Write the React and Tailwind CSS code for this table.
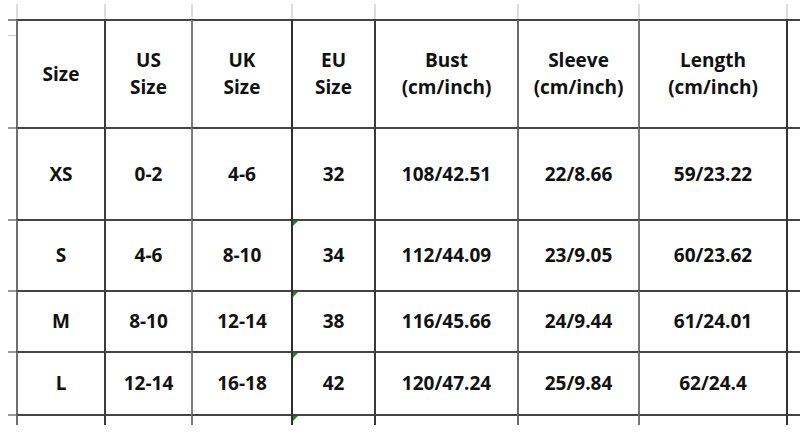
import React from 'react';

const header = [
  ['Size'],
  ['US', 'Size'],
  ['UK', 'Size'],
  ['EU', 'Size'],
  ['Bust', '(cm/inch)'],
  ['Sleeve', '(cm/inch)'],
  ['Length', '(cm/inch)'],
];

const rows = [
  ['XS', '0-2', '4-6', '32', '108/42.51', '22/8.66', '59/23.22'],
  ['S', '4-6', '8-10', '34', '112/44.09', '23/9.05', '60/23.62'],
  ['M', '8-10', '12-14', '38', '116/45.66', '24/9.44', '61/24.01'],
  ['L', '12-14', '16-18', '42', '120/47.24', '25/9.84', '62/24.4'],
];

// colour of each vertical rule, left edge of column 1..7 plus the right edge
const vLine = [
  'border-l-[#6f6f6f]',
  'border-l-[#3c3c3c]',
  'border-l-[#7d7d7d]',
  'border-l-[#2f2f2f]',
  'border-l-[#3a3a3a]',
  'border-l-[#6a6a6a]',
  'border-l-[#777777]',
  'border-l-[#333333]',
];

const cols = 'grid-cols-[8px_88px_87px_100px_83px_143px_121px_148px_14px]';

const Cell = ({ col, children, top = 'border-t-[#444444]', flag = false }) => (
  <div
    className={`relative flex flex-col items-center justify-center border-t-2 ${top} ${
      col > 0 ? `border-l-2 ${vLine[col - 1]}` : ''
    }`}
  >
    {flag && (
      <div className="absolute left-0 top-0 h-0 w-0 border-t-[5px] border-r-[5px] border-t-[#1f8a1f] border-r-transparent" />
    )}
    {children}
  </div>
);

export default function App() {
  return (
    <div className="h-[436px] w-[800px] overflow-hidden bg-white pt-1 pl-2 font-['Open_Sans','Noto_Sans',sans-serif] text-[19px] font-bold leading-[27px] text-[#111111]">
      {/* strip above the table */}
      <div className={`grid h-[15px] ${cols}`}>
        <div />
        {[...Array(8)].map((_, i) => (
          <div key={i} className="border-l-2 border-l-[#dddddd]" />
        ))}
      </div>

      {/* header row */}
      <div className={`grid h-[108px] ${cols}`}>
        <div className="flex flex-col border-t-2 border-t-[#888888]">
          <div className="h-[14px]" />
          <div className="h-px w-full bg-[#cccccc]" />
        </div>
        {header.map((lines, i) => (
          <Cell key={i} col={i + 1}>
            {lines.map((t) => (
              <span key={t}>{t}</span>
            ))}
          </Cell>
        ))}
        <Cell col={8} />
      </div>

      {/* data rows */}
      {rows.map((r, ri) => (
        <div
          key={r[0]}
          className={`grid ${cols} ${
            ri === 0 ? 'h-[92px]' : ri === 1 ? 'h-[71px]' : ri === 2 ? 'h-[61px]' : 'h-[63px]'
          }`}
        >
          <div className="border-t-2 border-t-[#999999]" />
          {r.map((v, i) => (
            <Cell key={i} col={i + 1} flag={i === 3 && ri > 0}>
              <span>{v}</span>
            </Cell>
          ))}
          <Cell col={8} />
        </div>
      ))}

      {/* strip below the table */}
      <div className={`grid h-[11px] ${cols}`}>
        <div className="border-t-2 border-t-[#999999]" />
        {[...Array(7)].map((_, i) => (
          <Cell key={i} col={i + 1} flag={i === 3} />
        ))}
        <Cell col={8} />
      </div>
    </div>
  );
}
